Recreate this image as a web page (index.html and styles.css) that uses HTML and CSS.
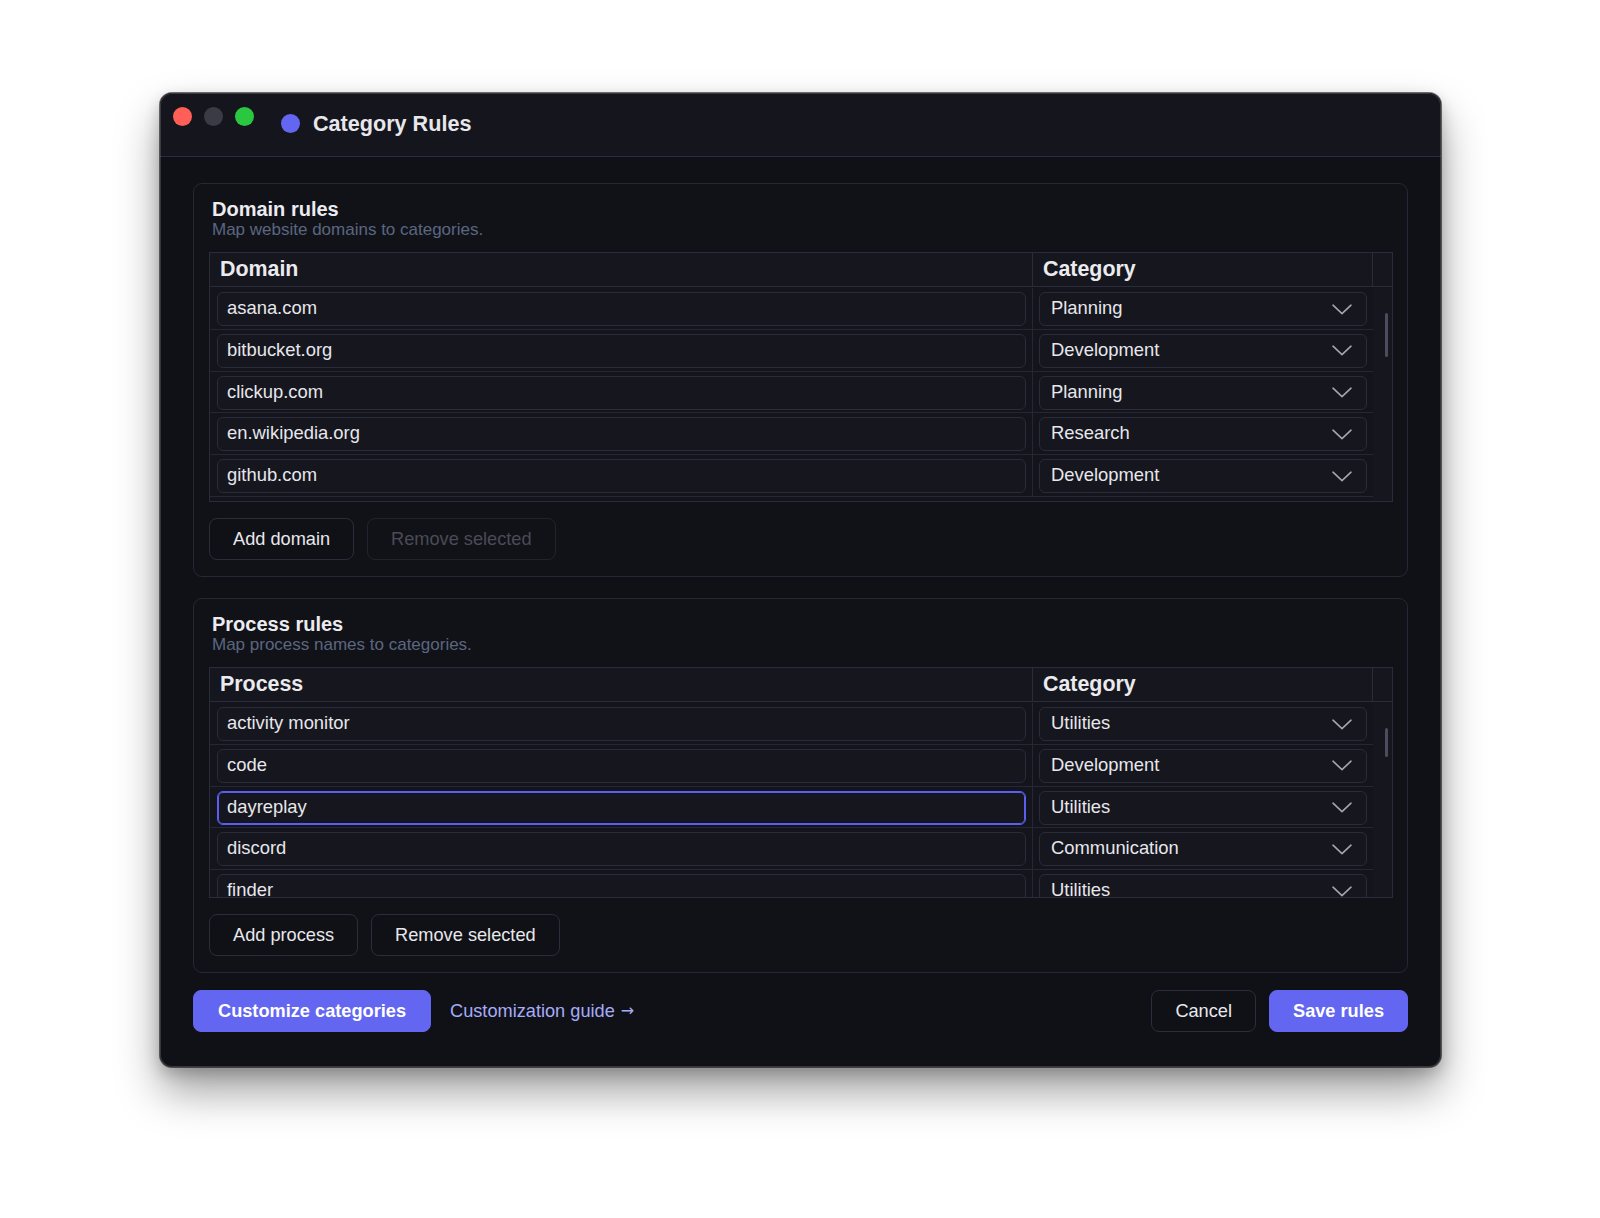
FILE: index.html
```html
<!DOCTYPE html>
<html lang="en">
<head>
<meta charset="utf-8">
<title>Category Rules</title>
<link rel="stylesheet" href="styles.css">
</head>
<body>
<div class="page">
  <div class="window">
    <div class="titlebar">
      <div class="lights">
        <span class="light red"></span>
        <span class="light grey"></span>
        <span class="light green"></span>
      </div>
      <div class="title-group">
        <span class="title-dot"></span>
        <span class="title-text">Category Rules</span>
      </div>
    </div>

    <div class="content">
      <section class="card card-domain">
        <div class="card-head">
          <div class="card-title">Domain rules</div>
          <div class="card-sub">Map website domains to categories.</div>
        </div>
        <div class="table">
          <div class="thead">
            <div class="th th-key">Domain</div>
            <div class="th th-cat">Category</div>
            <div class="th th-gutter"></div>
          </div>
          <div class="tbody tbody-domain">
            <div class="rows">
              <div class="row"><div class="cell cell-key"><div class="field">asana.com</div></div><div class="cell cell-cat"><div class="select"><span>Planning</span><svg class="chev" viewBox="0 0 20 11"><path d="M1 1.2 L10 9.6 L19 1.2"/></svg></div></div></div>
              <div class="row"><div class="cell cell-key"><div class="field">bitbucket.org</div></div><div class="cell cell-cat"><div class="select"><span>Development</span><svg class="chev" viewBox="0 0 20 11"><path d="M1 1.2 L10 9.6 L19 1.2"/></svg></div></div></div>
              <div class="row"><div class="cell cell-key"><div class="field">clickup.com</div></div><div class="cell cell-cat"><div class="select"><span>Planning</span><svg class="chev" viewBox="0 0 20 11"><path d="M1 1.2 L10 9.6 L19 1.2"/></svg></div></div></div>
              <div class="row"><div class="cell cell-key"><div class="field">en.wikipedia.org</div></div><div class="cell cell-cat"><div class="select"><span>Research</span><svg class="chev" viewBox="0 0 20 11"><path d="M1 1.2 L10 9.6 L19 1.2"/></svg></div></div></div>
              <div class="row"><div class="cell cell-key"><div class="field">github.com</div></div><div class="cell cell-cat"><div class="select"><span>Development</span><svg class="chev" viewBox="0 0 20 11"><path d="M1 1.2 L10 9.6 L19 1.2"/></svg></div></div></div>
            </div>
            <div class="gutter"><div class="thumb thumb-domain"></div></div>
          </div>
        </div>
        <div class="actions">
          <button class="btn">Add domain</button>
          <button class="btn btn-disabled">Remove selected</button>
        </div>
      </section>

      <section class="card card-process">
        <div class="card-head">
          <div class="card-title">Process rules</div>
          <div class="card-sub">Map process names to categories.</div>
        </div>
        <div class="table">
          <div class="thead">
            <div class="th th-key">Process</div>
            <div class="th th-cat">Category</div>
            <div class="th th-gutter"></div>
          </div>
          <div class="tbody tbody-process">
            <div class="rows">
              <div class="row"><div class="cell cell-key"><div class="field">activity monitor</div></div><div class="cell cell-cat"><div class="select"><span>Utilities</span><svg class="chev" viewBox="0 0 20 11"><path d="M1 1.2 L10 9.6 L19 1.2"/></svg></div></div></div>
              <div class="row"><div class="cell cell-key"><div class="field">code</div></div><div class="cell cell-cat"><div class="select"><span>Development</span><svg class="chev" viewBox="0 0 20 11"><path d="M1 1.2 L10 9.6 L19 1.2"/></svg></div></div></div>
              <div class="row row-selected"><div class="cell cell-key"><div class="field field-focus">dayreplay</div></div><div class="cell cell-cat"><div class="select"><span>Utilities</span><svg class="chev" viewBox="0 0 20 11"><path d="M1 1.2 L10 9.6 L19 1.2"/></svg></div></div></div>
              <div class="row"><div class="cell cell-key"><div class="field">discord</div></div><div class="cell cell-cat"><div class="select"><span>Communication</span><svg class="chev" viewBox="0 0 20 11"><path d="M1 1.2 L10 9.6 L19 1.2"/></svg></div></div></div>
              <div class="row"><div class="cell cell-key"><div class="field">finder</div></div><div class="cell cell-cat"><div class="select"><span>Utilities</span><svg class="chev" viewBox="0 0 20 11"><path d="M1 1.2 L10 9.6 L19 1.2"/></svg></div></div></div>
            </div>
            <div class="gutter"><div class="thumb thumb-process"></div></div>
          </div>
        </div>
        <div class="actions">
          <button class="btn">Add process</button>
          <button class="btn">Remove selected</button>
        </div>
      </section>

      <div class="footer">
        <button class="btn btn-primary">Customize categories</button>
        <a class="guide-link" href="#">Customization guide <span class="arrow">→</span></a>
        <div class="spacer"></div>
        <button class="btn">Cancel</button>
        <button class="btn btn-primary">Save rules</button>
      </div>
    </div>
  </div>
</div>
</body>
</html>
```

FILE: styles.css
```css
* { box-sizing: border-box; }

html, body {
  margin: 0;
  padding: 0;
  background: #ffffff;
}

body {
  font-family: "Liberation Sans", Arial, Helvetica, sans-serif;
  color: #e7e7ec;
  -webkit-font-smoothing: antialiased;
}

.page {
  padding: 93px 0 0 160px;
  height: 1218px;
}

.window {
  position: relative;
  width: 1281px;
  height: 974px;
  border-radius: 12px;
  background: #101117;
  box-shadow:
    0 0 0 1px rgba(0, 0, 0, 0.55),
    0 24px 44px rgba(0, 0, 0, 0.38),
    0 6px 16px rgba(0, 0, 0, 0.22);
  overflow: hidden;
}

.window::after {
  content: "";
  position: absolute;
  inset: 0;
  border-radius: 12px;
  box-shadow: inset 0 0 0 1px rgba(255, 255, 255, 0.16);
  pointer-events: none;
}

/* Title bar */
.titlebar {
  height: 64px;
  display: flex;
  align-items: center;
  background: #15161d;
  border-bottom: 1px solid #2b2a45;
  padding-bottom: 2px;
}

.lights {
  display: flex;
  gap: 12px;
  align-self: flex-start;
  margin: 14px 0 0 13px;
}

.light {
  width: 19px;
  height: 19px;
  border-radius: 50%;
  display: block;
}
.light.red { background: #ff5f57; }
.light.grey { background: #3a3b44; }
.light.green { background: #2ac841; }

.title-group {
  display: flex;
  align-items: center;
  margin-left: 27px;
}

.title-dot {
  width: 19px;
  height: 19px;
  border-radius: 50%;
  background: #6366f1;
  margin-right: 13px;
}

.title-text {
  font-size: 21.6px;
  font-weight: 700;
  color: #e8e8ec;
}

/* Content */
.content {
  padding: 26px 33px 0 33px;
}

.card {
  border: 1px solid #262737;
  border-radius: 9px;
  background: #111218;
  padding: 14px 14px 16px 15px;
}

.card-process {
  margin-top: 21px;
}

.card-head {
  padding-left: 3px;
  margin-bottom: 13px;
}

.card-title {
  font-size: 20px;
  font-weight: 700;
  line-height: 22px;
  color: #ececf0;
}

.card-sub {
  font-size: 17px;
  line-height: 19px;
  color: #5b6680;
}

/* Table */
.table {
  border: 1px solid #2a2b3b;
  background: #14151c;
}

.thead {
  display: grid;
  grid-template-columns: 823px 340px 1fr;
  border-bottom: 1px solid #2a2b3b;
  background: #15161e;
}

.th {
  font-size: 21.4px;
  font-weight: 700;
  line-height: 24px;
  padding: 4px 10px 5px 10px;
  color: #ebebef;
}

.th-key, .th-cat { border-right: 1px solid #2a2b3b; }

.tbody {
  display: flex;
  overflow: hidden;
}

.tbody-domain { height: 214px; }
.tbody-process { height: 195px; }

.rows {
  width: 1163px;
  padding-top: 1px;
}

.row {
  display: grid;
  grid-template-columns: 823px 340px;
  border-bottom: 1px solid #262736;
}

.cell {
  padding: 4px 6px 2.8px 6px;
}

.cell-key {
  padding-left: 7px;
  border-right: 1px solid #262736;
}

.field, .select {
  height: 34px;
  border: 1px solid #2a2b3b;
  border-radius: 6px;
  background: #15161e;
  font-size: 18.4px;
  line-height: 30px;
  color: #e7e7ec;
  white-space: nowrap;
  overflow: hidden;
}

.field {
  padding-left: 9px;
}

.field-focus {
  border-color: #5b5ff0;
  box-shadow: inset 0 0 0 1px #5b5ff0;
}

.select {
  display: flex;
  align-items: center;
  justify-content: space-between;
  padding: 0 14px 0 11px;
}

.select span {
  line-height: 30px;
  margin-bottom: 2px;
}

.chev {
  width: 20px;
  height: 11px;
  flex: none;
}

.chev path {
  fill: none;
  stroke: #a4a5ae;
  stroke-width: 1.6;
  stroke-linecap: round;
  stroke-linejoin: round;
}

.gutter {
  width: 19px;
  flex: none;
  background: #15161e;
}

.thumb {
  width: 3px;
  margin-left: 12px;
  margin-top: 26px;
  border-radius: 2px;
  background: #4a4d5d;
}
.thumb-domain { height: 44px; }
.thumb-process { height: 29px; }

/* Buttons */
.actions {
  display: flex;
  gap: 13px;
  margin-top: 16px;
}

.btn {
  height: 42px;
  padding: 0 23px;
  border: 1px solid #2c2d3c;
  border-radius: 8px;
  background: #101117;
  color: #e8e8ec;
  font-family: inherit;
  font-size: 18.2px;
  line-height: 37px;
  cursor: pointer;
}

.btn-disabled {
  color: #4a4b56;
  border-color: #22232e;
  background: #111218;
}

.btn-primary {
  background: #6366f1;
  border-color: #6366f1;
  color: #ffffff;
  font-weight: 700;
}

/* Footer */
.footer {
  display: flex;
  align-items: center;
  gap: 13px;
  margin-top: 17px;
}

.footer .btn-primary:first-child {
  padding: 0 24px;
}

.guide-link {
  margin-left: 6px;
  font-size: 18.2px;
  color: #a6acf7;
  text-decoration: none;
  display: flex;
  align-items: center;
}

.arrow {
  font-family: "DejaVu Sans", sans-serif;
  font-size: 16px;
  margin-left: 6px;
  margin-bottom: 2px;
}

.spacer { flex: 1; }
```
